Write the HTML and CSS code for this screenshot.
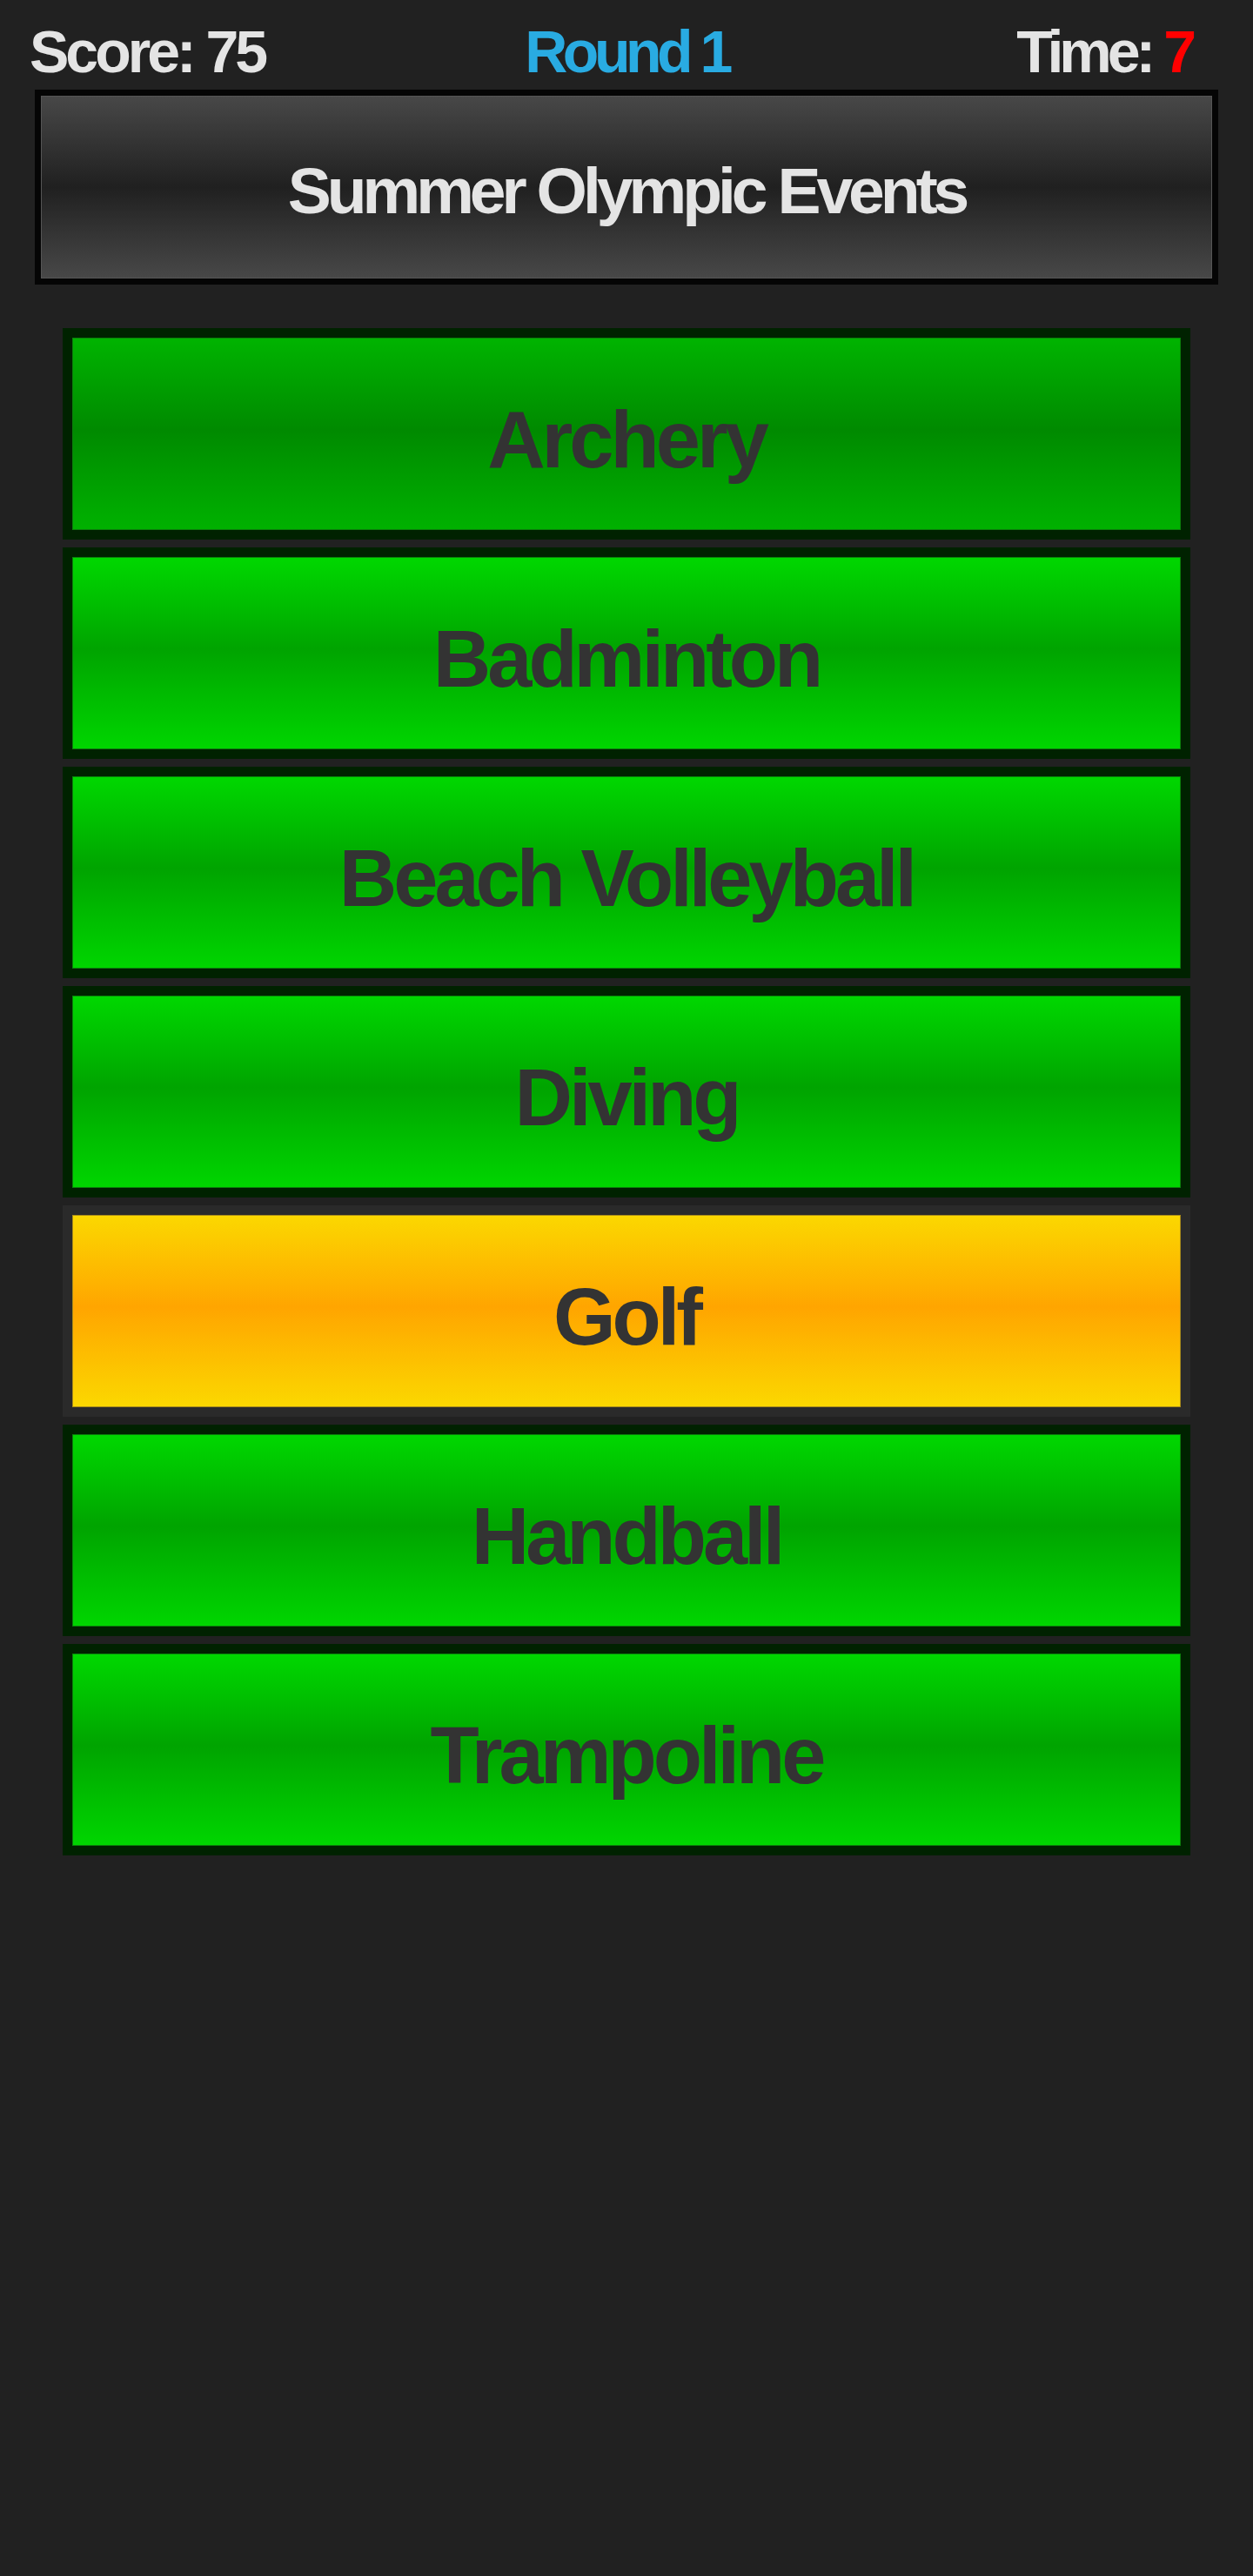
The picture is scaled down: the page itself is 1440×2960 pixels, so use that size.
FILE: index.html
```html
<!DOCTYPE html>
<html lang="en">
<head>
<meta charset="utf-8">
<title>Summer Olympic Events</title>
<link rel="stylesheet" href="styles.css">
</head>
<body>
<header class="hud">
  <div class="score">Score: 75</div>
  <div class="round">Round 1</div>
  <div class="time">Time: <span class="time-val">7</span></div>
</header>
<div class="category">Summer Olympic Events</div>
<div class="answers">
  <div class="answer answer--dark">Archery</div>
  <div class="answer">Badminton</div>
  <div class="answer">Beach Volleyball</div>
  <div class="answer">Diving</div>
  <div class="answer answer--gold">Golf</div>
  <div class="answer">Handball</div>
  <div class="answer">Trampoline</div>
</div>
</body>
</html>
```
FILE: styles.css
```css
html, body {
  margin: 0;
  padding: 0;
  background: #212121;
}
body {
  font-family: "Liberation Sans", Arial, Helvetica, sans-serif;
  font-weight: bold;
  min-height: 2960px;
}
.hud {
  display: grid;
  grid-template-columns: 1fr auto 1fr;
  align-items: baseline;
  padding: 20px 34px 0 34px;
  height: 78px;
  font-size: 68px;
  line-height: 78px;
  letter-spacing: -5px;
  color: #e4e4e4;
}
.score { justify-self: start; letter-spacing: -4px; }
.round { color: #29abe2; letter-spacing: -5.5px; }
.time { justify-self: end; margin-right: 36px; }
.time-val { color: #ff0000; }

.category {
  margin: 5px 40px 0 40px;
  border: 7px solid #050505;
  height: 144px;
  padding-top: 66px;
  text-align: center;
  font-size: 75px;
  line-height: normal;
  letter-spacing: -5px;
  color: #e4e4e4;
  background: linear-gradient(to bottom, #484848 0%, #202020 50%, #484848 100%);
  box-shadow: inset 0 0 0 1px #555;
}

.answers {
  margin: 50px 72px 0 72px;
  display: flex;
  flex-direction: column;
  gap: 9px;
}
.answer {
  border: 11px solid #002200;
  height: 156px;
  padding-top: 65px;
  text-align: center;
  font-size: 92px;
  line-height: normal;
  letter-spacing: -4px;
  color: #333333;
  background: linear-gradient(to bottom, #00d800 0%, #00a400 48%, #00d600 100%);
  box-shadow: inset 0 0 0 1px #0b7f0b;
}
.answer--dark {
  background: linear-gradient(to bottom, #00b400 0%, #008a00 48%, #00b200 100%);
}
.answer--gold {
  border-color: #2a2a2a;
  background: linear-gradient(to bottom, #fbd800 0%, #ffa500 48%, #fbd800 100%);
  box-shadow: inset 0 0 0 1px #a88a1a;
}
```
